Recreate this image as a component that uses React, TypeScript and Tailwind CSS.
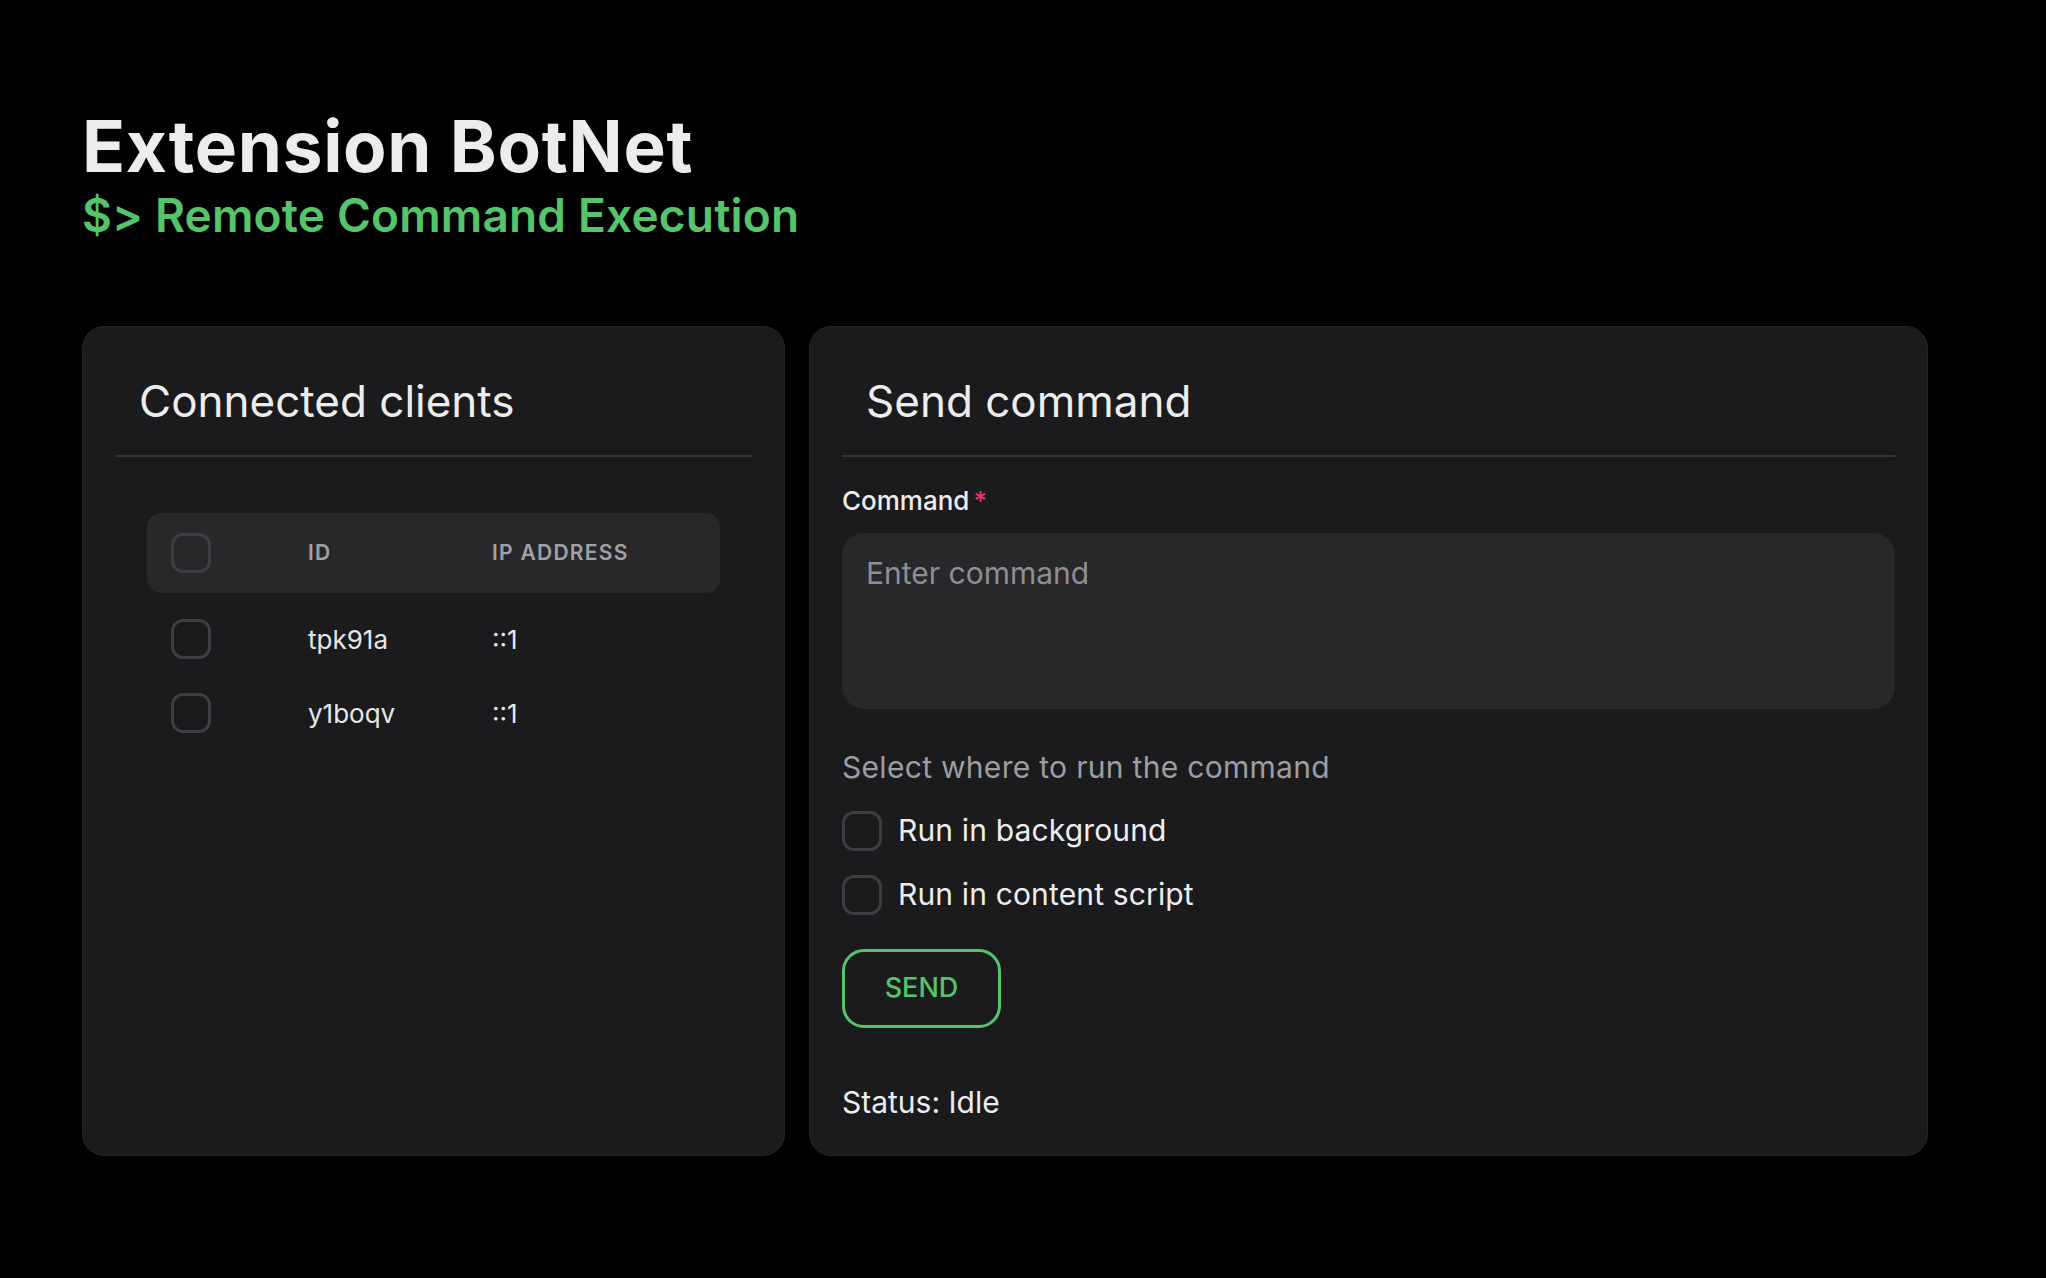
import React from 'react';

const CLIENTS = [
  { id: 'tpk91a', ip: '::1' },
  { id: 'y1boqv', ip: '::1' },
];

const Box: React.FC = () => (
  <span className="block w-10 h-10 shrink-0 rounded-[12px] border-[3px] border-[#3d3d42]" />
);

const CardHeader: React.FC<{ title: string }> = ({ title }) => (
  <div className="px-6 pt-4 pb-7 border-b-2 border-[#343437]">
    <h2 className="text-[44px] leading-[52px] font-normal text-[#ededef]">{title}</h2>
  </div>
);

const App: React.FC = () => {
  return (
    <div className="min-h-screen bg-black font-['Inter',sans-serif] pl-[82px] pt-[111px] pb-20">
      <h1 className="text-[71px] leading-none font-bold text-[#ececee] tracking-[0.01em]">Extension BotNet</h1>
      <p className="mt-[10px] text-[46px] leading-none font-semibold text-[#55c46b] tracking-[0.004em]">$&gt; Remote Command Execution</p>

      <div className="mt-[88px] flex items-stretch gap-6">
        {/* clients */}
        <section className="w-[703px] rounded-[22px] bg-[#1b1b1d] border border-[#242427] p-8">
          <CardHeader title="Connected clients" />
          <div className="px-8 mt-14">
            <div className="grid grid-cols-[161px_184px_1fr] items-center h-20 rounded-[14px] bg-[#28282b]">
              <div className="pl-6"><Box /></div>
              <div className="text-[21px] font-semibold tracking-[0.06em] text-[#a1a1a8]">ID</div>
              <div className="text-[21px] font-semibold tracking-[0.06em] text-[#a1a1a8]">IP ADDRESS</div>
            </div>
            <div className="mt-[9px]">
              {CLIENTS.map((c) => (
                <div key={c.id} className="grid grid-cols-[161px_184px_1fr] items-center h-[74px] text-[26px] text-[#e6e6e9]">
                  <div className="pl-6"><Box /></div>
                  <div>{c.id}</div>
                  <div>{c.ip}</div>
                </div>
              ))}
            </div>
          </div>
        </section>

        {/* command form */}
        <section className="w-[1119px] rounded-[22px] bg-[#1b1b1d] border border-[#242427] px-8 pt-8 pb-[30px]">
          <CardHeader title="Send command" />
          <label className="block mt-6 text-[26px] leading-[39px] font-medium text-[#ededef]">
            Command<span className="ml-1 text-[#e8356a]">*</span>
          </label>
          <textarea
            placeholder="Enter command"
            className="mt-[13px] block w-full h-[176px] resize-none rounded-[22px] bg-[#28282b] px-6 pt-[18px] text-[30px] leading-[45px] text-[#ededef] placeholder:text-[#8e8e94] outline-none"
          />
          <p className="mt-9 text-[30px] leading-[45px] text-[#9d9da4] tracking-[0.01em]">Select where to run the command</p>
          <div className="mt-[18px] flex flex-col gap-[19px]">
            {['Run in background', 'Run in content script'].map((t) => (
              <label key={t} className="flex items-center gap-4 h-[45px] text-[30px] text-[#ededef] tracking-[0.005em]">
                <Box />
                {t}
              </label>
            ))}
          </div>
          <button className="mt-8 flex items-center justify-center w-[159px] h-[79px] rounded-[22px] border-[3px] border-[#55c46b] text-[27px] font-medium text-[#55c46b]">
            SEND
          </button>
          <p className="mt-[52px] text-[30px] leading-[45px] text-[#ededef]">Status: Idle</p>
        </section>
      </div>
    </div>
  );
};

export default App;
